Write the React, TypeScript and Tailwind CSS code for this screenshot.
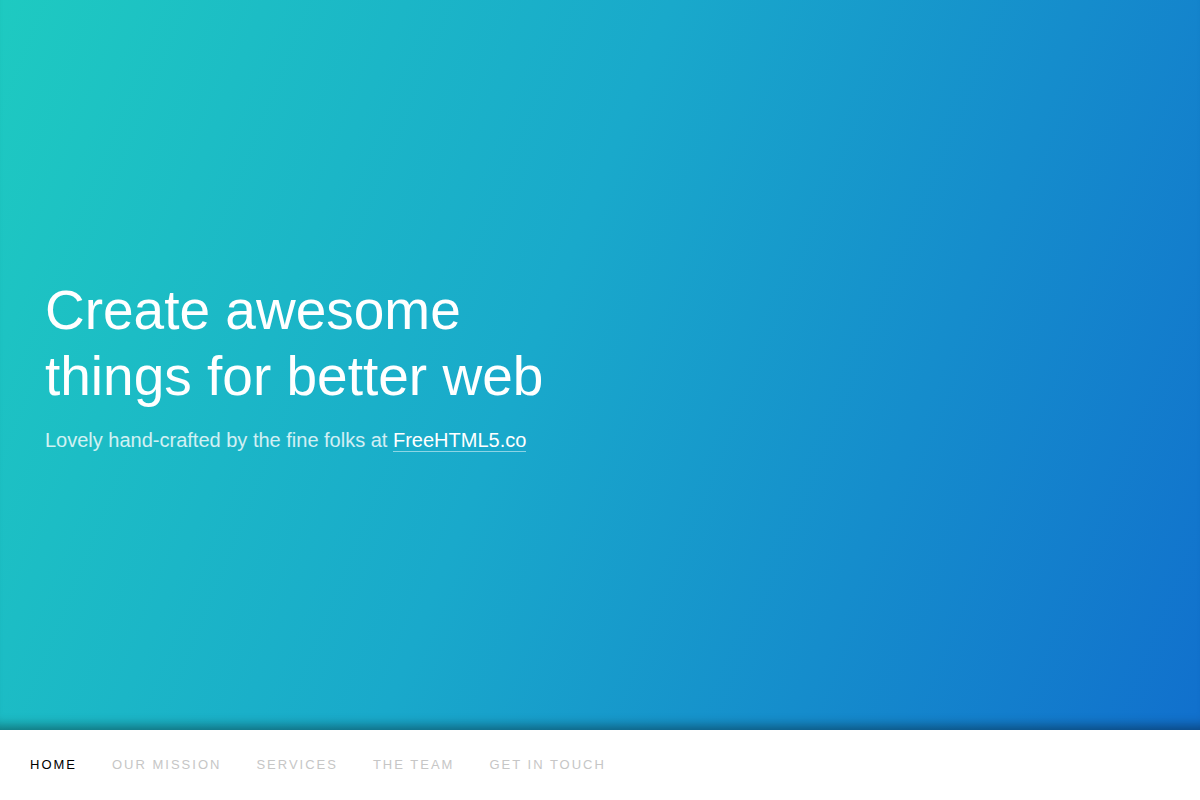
import React from "react";

export default function App() {
  const items = ["HOME", "OUR MISSION", "SERVICES", "THE TEAM", "GET IN TOUCH"];
  return (
    <div className="w-full min-h-screen bg-white" style={{ fontFamily: '"Liberation Sans", Arial, sans-serif' }}>
      <section className="h-[730px] w-full flex items-center bg-[linear-gradient(112deg,#1ecac1_0%,#19a9cb_45%,#1170cd_100%)] shadow-[inset_0_-14px_12px_-10px_rgba(0,0,0,0.4)]">
        <div className="pl-[45px] pt-[2px]">
          <h1 className="text-[55px] leading-[66px] text-white font-normal m-0">
            Create awesome
            <br />
            things for better web
          </h1>
          <p className="mt-[16px] text-[20px] leading-[30px] text-white/80">
            Lovely hand-crafted by the fine folks at{" "}
            <a href="#" className="text-white border-b border-white/50">
              FreeHTML5.co
            </a>
          </p>
        </div>
      </section>
      <nav className="h-[70px] flex items-center px-[30px] gap-[35px]">
        {items.map((t, i) => (
          <a
            key={t}
            href="#"
            className={`text-[13px] tracking-[2px] ${i === 0 ? "text-black" : "text-[#c6c6c6]"}`}
          >
            {t}
          </a>
        ))}
      </nav>
    </div>
  );
}
